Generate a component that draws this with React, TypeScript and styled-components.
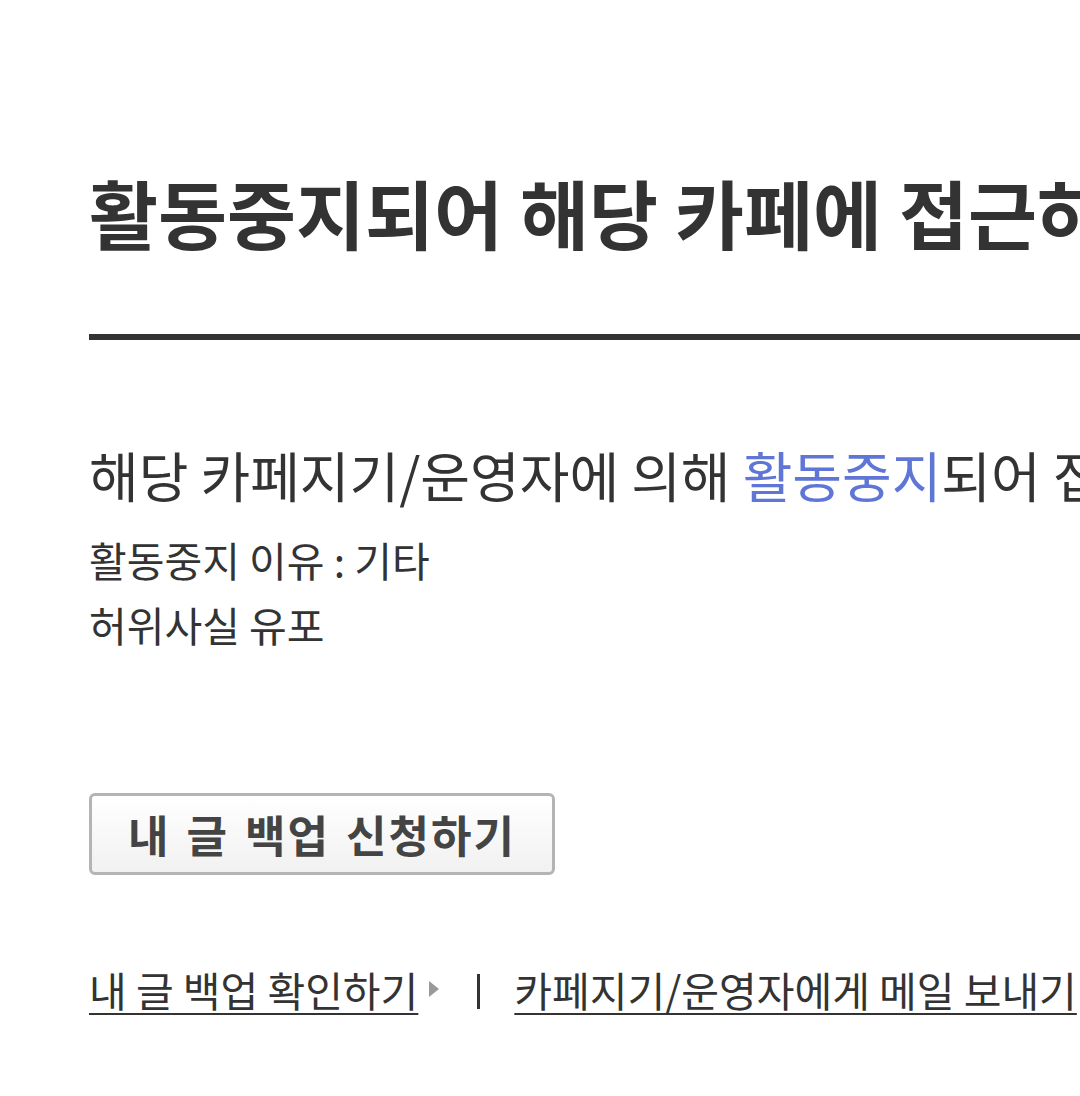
import styled, { createGlobalStyle } from "styled-components";

const GlobalStyle = createGlobalStyle`
  html, body {
    margin: 0;
    padding: 0;
    background: #fff;
    overflow: hidden;
  }
  body {
    font-family: "Noto Sans CJK KR", "Noto Sans", sans-serif;
    color: #333;
  }
`;

const Page = styled.div`
  width: 1700px;
  padding: 162px 0 0 89px;
`;

const Header = styled.div`
  border-bottom: 6px solid #333;
  padding-bottom: 72px;
`;

const Title = styled.h2`
  margin: 0;
  font-size: 75px;
  line-height: 100px;
  font-weight: 700;
  color: #333;
  white-space: nowrap;
`;

const Content = styled.div`
  padding-top: 99px;
`;

const Lead = styled.p`
  margin: 0 0 16px;
  font-size: 54px;
  line-height: 72px;
  white-space: nowrap;
`;

const Accent = styled.span`
  color: #5f76d6;
`;

const Reason = styled.p`
  margin: 0;
  font-size: 41px;
  line-height: 65px;
  white-space: nowrap;
`;

const BackupButton = styled.button`
  display: flex;
  align-items: center;
  justify-content: center;
  margin-top: 136px;
  width: 466px;
  height: 82px;
  padding: 0;
  border: 3px solid #b4b4b4;
  border-radius: 6px;
  background: linear-gradient(#ffffff, #f1f1f1);
  font-family: "Noto Sans CJK KR", sans-serif;
  font-size: 44px;
  font-weight: 700;
  color: #444;
  letter-spacing: 2px;
  word-spacing: 4px;
`;

const LinkRow = styled.div`
  display: flex;
  align-items: center;
  margin-top: 88px;
  font-size: 41px;
  line-height: 52px;
  white-space: nowrap;
`;

const TextLink = styled.a`
  color: #333;
  text-decoration: underline;
  text-decoration-thickness: 3px;
  text-underline-offset: 6px;
`;

const Arrow = styled.span`
  width: 0;
  height: 0;
  margin-left: 11px;
  border-top: 8px solid transparent;
  border-bottom: 8px solid transparent;
  border-left: 10px solid #999;
`;

const Divider = styled.span`
  width: 3px;
  height: 35px;
  margin: 5px 34px 0 38px;
  background: #333;
`;

export default function App() {
  return (
    <>
      <GlobalStyle />
      <Page>
        <Header>
          <Title>활동중지되어 해당 카페에 접근하실 수 없습니다.</Title>
        </Header>
        <Content>
          <Lead>
            해당 카페지기/운영자에 의해 <Accent>활동중지</Accent>되어 접근하실 수
            없습니다.
          </Lead>
          <Reason>활동중지 이유 : 기타</Reason>
          <Reason>허위사실 유포</Reason>
          <BackupButton type="button">내 글 백업 신청하기</BackupButton>
          <LinkRow>
            <TextLink href="#">내 글 백업 확인하기</TextLink>
            <Arrow />
            <Divider />
            <TextLink href="#">카페지기/운영자에게 메일 보내기</TextLink>
          </LinkRow>
        </Content>
      </Page>
    </>
  );
}
